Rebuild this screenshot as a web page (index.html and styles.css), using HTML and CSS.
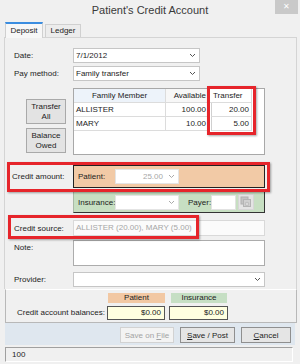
FILE: index.html
```html
<!DOCTYPE html>
<html lang="en">
<head>
    <meta charset="UTF-8">
    <meta name="viewport" content="width=device-width, initial-scale=1.0">
    <title>Patient's Credit Account</title>
    <link rel="stylesheet" href="styles.css">
</head>
<body>

    <div class="window">
        <div class="titlebar">
            <span></span>
            <span class="title">Patient's Credit Account</span>
            <span class="close">&#10005;</span>
        </div>

        <div class="tabs">
            <div class="tab active">Deposit</div>
            <div class="tab">Ledger</div>
        </div>

        <div class="panel">
            <div class="row row-date">
                <div class="lbl">Date:</div>
                <div class="combo short">
                    <span>7/1/2012</span>
                    <svg class="chev" width="7" height="5" viewBox="0 0 7 5"><path d="M1 1l2.5 2.5L6 1" fill="none" stroke="#555"/></svg>
                </div>
            </div>
            <div class="row row-pay">
                <div class="lbl">Pay method:</div>
                <div class="combo short">
                    <span>Family transfer</span>
                    <svg class="chev" width="7" height="5" viewBox="0 0 7 5"><path d="M1 1l2.5 2.5L6 1" fill="none" stroke="#555"/></svg>
                </div>
            </div>

            <div class="row row-grid">
                <div class="side">
                    <button class="side-btn first">Transfer<br>All</button>
                    <button class="side-btn">Balance<br>Owed</button>
                </div>
                <div class="grid">
                    <div class="cell head family">Family Member</div>
                    <div class="cell head num">Available</div>
                    <div class="cell head transfer-head">Transfer</div>
                    <div class="cell head filler"></div>

                    <div class="cell">ALLISTER</div>
                    <div class="cell num">100.00</div>
                    <div class="cell num edit">20.00</div>
                    <div class="cell filler"></div>

                    <div class="cell">MARY</div>
                    <div class="cell num">10.00</div>
                    <div class="cell num edit">5.00</div>
                    <div class="cell filler"></div>
                </div>
            </div>

            <div class="row row-amount">
                <div class="lbl amount-lbl">Credit amount:</div>
                <div class="peach">
                    <span class="inner-lbl">Patient:</span>
                    <div class="combo small disabled">
                        <span class="val">25.00</span>
                        <svg class="chev" width="7" height="5" viewBox="0 0 7 5"><path d="M1 1l2.5 2.5L6 1" fill="none" stroke="#aaa"/></svg>
                    </div>
                </div>
            </div>
            <div class="row row-ins">
                <div class="lbl"></div>
                <div class="green">
                    <span class="inner-lbl">Insurance:</span>
                    <div class="combo small">
                        <span></span>
                        <svg class="chev" width="7" height="5" viewBox="0 0 7 5"><path d="M1 1l2.5 2.5L6 1" fill="none" stroke="#aaa"/></svg>
                    </div>
                    <span class="payer-lbl">Payer:</span>
                    <div class="payer-box"></div>
                    <div class="payer-btn">
                        <svg width="12" height="12" viewBox="0 0 12 12">
                            <rect x="1" y="1" width="7" height="7" fill="#c4c4c4" stroke="#b0b0b0"/>
                            <rect x="3.5" y="3.5" width="7" height="7" fill="#d0d0d0" stroke="#b4b4b4"/>
                            <circle cx="7" cy="8" r="2.2" fill="#bdbdbd"/>
                            <path d="M7 6.8v2.4M5.8 8h2.4" stroke="#e8e8e8" stroke-width="0.8"/>
                        </svg>
                    </div>
                </div>
            </div>

            <div class="row row-source">
                <div class="lbl">Credit source:</div>
                <div class="textbox">ALLISTER (20.00), MARY (5.00)</div>
            </div>

            <div class="row row-note">
                <div class="lbl top">Note:</div>
                <div class="textarea"></div>
            </div>

            <div class="row row-provider">
                <div class="lbl">Provider:</div>
                <div class="combo full">
                    <span></span>
                    <svg class="chev" width="7" height="5" viewBox="0 0 7 5"><path d="M1 1l2.5 2.5L6 1" fill="none" stroke="#555"/></svg>
                </div>
            </div>
        </div>

        <div class="balances">
            <div class="bal-row">
                <div class="bal-lbl"></div>
                <div class="bal-head patient">Patient</div>
                <div class="bal-head insurance">Insurance</div>
            </div>
            <div class="bal-row values">
                <div class="bal-lbl">Credit account balances:</div>
                <div class="bal-val">$0.00</div>
                <div class="bal-val">$0.00</div>
            </div>
        </div>

        <div class="buttonbar">
            <button class="btn btn-file disabled">Save on <u>F</u>ile</button>
            <button class="btn btn-post"><u>S</u>ave / Post</button>
            <button class="btn btn-cancel"><u>C</u>ancel</button>
        </div>

        <div class="status">100</div>

        <!-- highlight marks -->
        <div class="mark mark-transfer"></div>
        <div class="mark mark-amount"></div>
        <div class="mark mark-source"></div>
    </div>

</body>
</html>
```

FILE: styles.css
```css
* {
    box-sizing: border-box;
}
body {
    margin: 0;
    font-family: "Liberation Sans", Arial, sans-serif;
    font-size: 8px;
    color: #1c1c1c;
    background: #f0f0f0;
}
.window {
    position: relative;
    width: 300px;
    height: 364px;
    background: #f0f0f0;
    overflow: hidden;
}
.titlebar {
    height: 22px;
    display: grid;
    grid-template-columns: 1fr auto 1fr;
}
.title {
    font-size: 11px;
    line-height: 20px;
    color: #3a3a3a;
}
.close {
    justify-self: end;
    width: 23px;
    height: 14px;
    margin-right: 2px;
    background: #c9c9c9;
    color: #fff;
    font-size: 8px;
    line-height: 14px;
    text-align: center;
}
.tabs {
    height: 15px;
    display: flex;
    align-items: flex-end;
    padding-left: 5px;
}
.tab {
    width: 36px;
    height: 13px;
    margin-left: 2px;
    border: 1px solid #d0d0d0;
    border-bottom: none;
    background: #ececec;
    text-align: center;
    line-height: 12px;
}
.tab.active {
    width: 38px;
    height: 16px;
    margin-left: 0;
    margin-bottom: -1px;
    border-top: 2px solid #3b8de0;
    background: #f7f7f7;
    line-height: 14px;
    position: relative;
    z-index: 1;
}
.panel {
    margin: 0 3px 0 4px;
    height: 252px;
    border: 1px solid #d4d4d4;
    border-bottom: none;
    padding-top: 10px;
}
.row {
    display: flex;
    padding-left: 9px;
}
.lbl {
    width: 59px;
    flex: none;
    display: flex;
    align-items: center;
}
.lbl.top {
    align-items: flex-start;
    padding-top: 3px;
}
.lbl.amount-lbl {
    margin-left: -2px;
    width: 61px;
}
.row-date { height: 15px; }
.row-pay { height: 15px; margin-top: 3px; }
.row-grid { height: 67px; margin-top: 7px; }
.row-amount { height: 23px; margin-top: 10px; }
.row-ins { height: 22px; margin-top: 3px; }
.row-source { height: 16px; margin-top: 7px; }
.row-note { height: 26px; margin-top: 4px; }
.row-provider { height: 15px; margin-top: 6px; }

.combo {
    height: 15px;
    background: #fff;
    border: 1px solid #c6c6c6;
    display: flex;
    align-items: center;
    justify-content: space-between;
    padding: 0 3px 0 2px;
}
.combo.short { width: 127px; }
.combo.full { width: 192px; }
.combo.small {
    width: 64px;
    border-color: #e4e4e4;
}
.combo.disabled .val {
    flex: 1;
    text-align: right;
    padding-right: 5px;
    color: #a8a8a8;
}

.side {
    width: 59px;
    flex: none;
    display: flex;
    flex-direction: column;
    align-items: flex-start;
}
.side-btn {
    width: 40px;
    height: 25px;
    margin: 4px 0 0 12px;
    padding: 0;
    font-family: inherit;
    font-size: 8px;
    line-height: 10px;
    color: #1c1c1c;
    background: #e3e3e3;
    border: 1px solid #a9a9a9;
}
.side-btn.first {
    margin-top: 11px;
}
.grid {
    width: 192px;
    height: 67px;
    background: #fff;
    border: 1px solid #a8a8a8;
    display: grid;
    grid-template-columns: 92px 43px 43px 1fr;
    grid-template-rows: 14px 14px 14px;
    align-content: start;
}
.cell {
    border-right: 1px solid #dcdcdc;
    border-bottom: 1px solid #dcdcdc;
    padding: 0 2px;
    line-height: 13px;
    white-space: nowrap;
    overflow: hidden;
}
.cell.head {
    background: #f7f7f7;
    text-align: center;
}
.cell.head.family {
    background: #edf3fa;
}
.cell.head.num {
    text-align: right;
}
.cell.head.transfer-head {
    text-align: left;
    padding-left: 4px;
    background: #fff;
}
.cell.num {
    text-align: right;
}
.cell.edit {
    border-left: 1px solid #d0d0d0;
    margin-left: 2px;
}
.cell.filler {
    border: none;
    background: #fff;
}
.cell.head.filler {
    background: #fff;
}

.peach {
    width: 192px;
    height: 23px;
    background: #f2caa6;
    border: 1px solid #222;
    display: flex;
    align-items: center;
    padding-left: 4px;
}
.green {
    width: 192px;
    height: 22px;
    background: #c7dfc2;
    border: 1px solid #a9b9a6;
    border-right-color: #333;
    border-bottom-color: #333;
    display: flex;
    align-items: center;
    padding-left: 4px;
}
.inner-lbl {
    width: 37px;
    flex: none;
}
.payer-lbl {
    margin-left: 9px;
    width: 23px;
}
.payer-box {
    width: 25px;
    height: 15px;
    background: #fff;
    border: 1px solid #e2e2e2;
}
.payer-btn {
    width: 16px;
    height: 16px;
    margin-left: 2px;
    background: #e4e4e4;
    border: 1px solid #d6d6d6;
    display: flex;
    align-items: center;
    justify-content: center;
}
.textbox {
    width: 192px;
    height: 16px;
    background: #fbfbfb;
    border: 1px solid #d9d9d9;
    color: #a6a6a6;
    padding-left: 2px;
    line-height: 14px;
}
.textarea {
    width: 192px;
    height: 26px;
    background: #fff;
    border: 1px solid #acacac;
}

.balances {
    margin-left: 5px;
    width: 292px;
    height: 34px;
    border: 1px solid #b8b8b8;
    border-top-color: #fff;
    padding-top: 3px;
}
.bal-row {
    display: flex;
    height: 10px;
}
.bal-row.values {
    height: 14px;
    margin-top: 3px;
}
.bal-lbl {
    width: 99px;
    flex: none;
    text-align: right;
    line-height: 14px;
}
.bal-head {
    height: 10px;
    line-height: 10px;
    text-align: center;
}
.bal-head.patient {
    width: 57px;
    margin-left: 3px;
    background: #f2c8a3;
}
.bal-head.insurance {
    width: 56px;
    margin-left: 6px;
    background: #c6dfc4;
}
.bal-val {
    width: 58px;
    height: 14px;
    margin-left: 2px;
    background: #ffffe0;
    border: 1px solid #555;
    text-align: right;
    padding-right: 3px;
    line-height: 12px;
}
.bal-val + .bal-val {
    width: 59px;
    margin-left: 4px;
}

.buttonbar {
    margin-left: 5px;
    width: 290px;
    height: 22px;
    background: #dfe7ef;
    display: flex;
    justify-content: flex-end;
    align-items: flex-start;
    gap: 6px;
    padding: 4px 4px 0 0;
}
.btn {
    height: 16px;
    padding: 0;
    font-family: inherit;
    font-size: 8px;
    color: #1c1c1c;
    background: #e5e5e5;
    border: 1px solid #8f8f8f;
}
.btn-file { width: 54px; }
.btn-post { width: 55px; }
.btn-cancel { width: 50px; }
.btn.disabled {
    color: #a3a3a3;
    background: #f3f3f3;
    border-color: #d2d2d2;
}
.status {
    margin: 2px 0 0 5px;
    width: 288px;
    height: 15px;
    border: 1px solid;
    border-color: #a0a0a0 #fff #fff #a0a0a0;
    padding-left: 6px;
    line-height: 13px;
}

.mark {
    position: absolute;
    border: 3px solid #e6252b;
    box-shadow: 1px 1px 2px rgba(0, 0, 0, 0.35);
}
.mark-transfer {
    left: 207px;
    top: 86px;
    width: 49px;
    height: 49px;
}
.mark-amount {
    left: 7px;
    top: 162px;
    width: 263px;
    height: 30px;
}
.mark-source {
    left: 8px;
    top: 215px;
    width: 191px;
    height: 24px;
}
```
